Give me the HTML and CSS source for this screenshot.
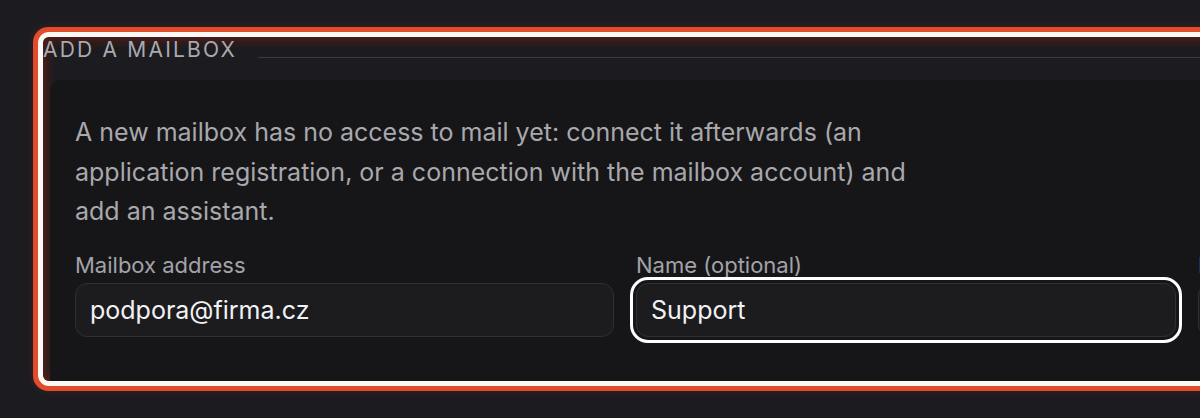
FILE: index.html
```html
<!DOCTYPE html>
<html lang="en">
<head>
<meta charset="utf-8">
<title>Add a mailbox</title>
<link rel="stylesheet" href="styles.css">
</head>
<body>
<div class="page">
  <section class="panel">
    <div class="panel-head">
      <span class="legend">ADD A MAILBOX</span>
      <span class="rule"></span>
    </div>
    <div class="card">
      <p class="intro">A new mailbox has no access to mail yet: connect it afterwards (an application registration, or a connection with the mailbox account) and add an assistant.</p>
      <div class="fields">
        <label class="field">
          <span class="label">Mailbox address</span>
          <span class="input">podpora@firma.cz</span>
        </label>
        <label class="field">
          <span class="label">Name (optional)</span>
          <span class="input focused">Support</span>
        </label>
        <label class="field">
          <span class="label">Notes</span>
          <span class="input"></span>
        </label>
      </div>
    </div>
  </section>
</div>
</body>
</html>
```
FILE: styles.css
```css
html, body {
  margin: 0;
  padding: 0;
  background: #1c1c20;
  overflow: hidden;
  width: 1200px;
  height: 418px;
}
body {
  font-family: Inter, "Noto Sans", "Liberation Sans", sans-serif;
  color: #a9a9ae;
}
.page {
  padding: 37px 0 0 43px;
}
.panel {
  width: 1900px;
  height: 344px;
  border-radius: 6px;
  overflow: hidden;
  background: #1c1c20;
  box-shadow:
    0 0 0 5px #fcf8f6,
    0 0 0 10px #e24c2c,
    0 0 6px 11px rgba(225, 75, 45, 0.12),
    inset 0 0 10px 4px rgba(120, 30, 20, 0.6);
}
.panel-head {
  display: flex;
  align-items: flex-start;
  padding-top: 2px;
  height: 22px;
  margin-bottom: 19px;
}
.legend {
  font-size: 21px;
  line-height: 22px;
  letter-spacing: 2.2px;
  color: #aaa9b0;
  white-space: nowrap;
}
.rule {
  flex: 1;
  height: 1px;
  background: #3a3a40;
  margin-left: 21px;
  margin-top: 18px;
}
.card {
  margin-left: 7px;
  background: #161618;
  border-radius: 10px 0 0 0;
  padding: 33px 25px 60px 25px;
}
.intro {
  margin: 0 0 20px 0;
  max-width: 850px;
  font-size: 25px;
  line-height: 39.5px;
  color: #a8a8ad;
}
.fields {
  display: grid;
  grid-template-columns: 539px 540px 540px;
  column-gap: 22px;
}
.field {
  display: flex;
  flex-direction: column;
}
.label {
  font-size: 22px;
  line-height: 26px;
  color: #a3a3a9;
  margin-bottom: 5px;
}
.input {
  display: flex;
  align-items: center;
  box-sizing: border-box;
  height: 54px;
  padding: 0 14px;
  border: 1px solid #2f2f34;
  border-radius: 12px;
  background: #1c1c1f;
  color: #f2f2f4;
  font-size: 25px;
}
.input.focused {
  outline: 3px solid #ffffff;
  outline-offset: 3px;
}
```
